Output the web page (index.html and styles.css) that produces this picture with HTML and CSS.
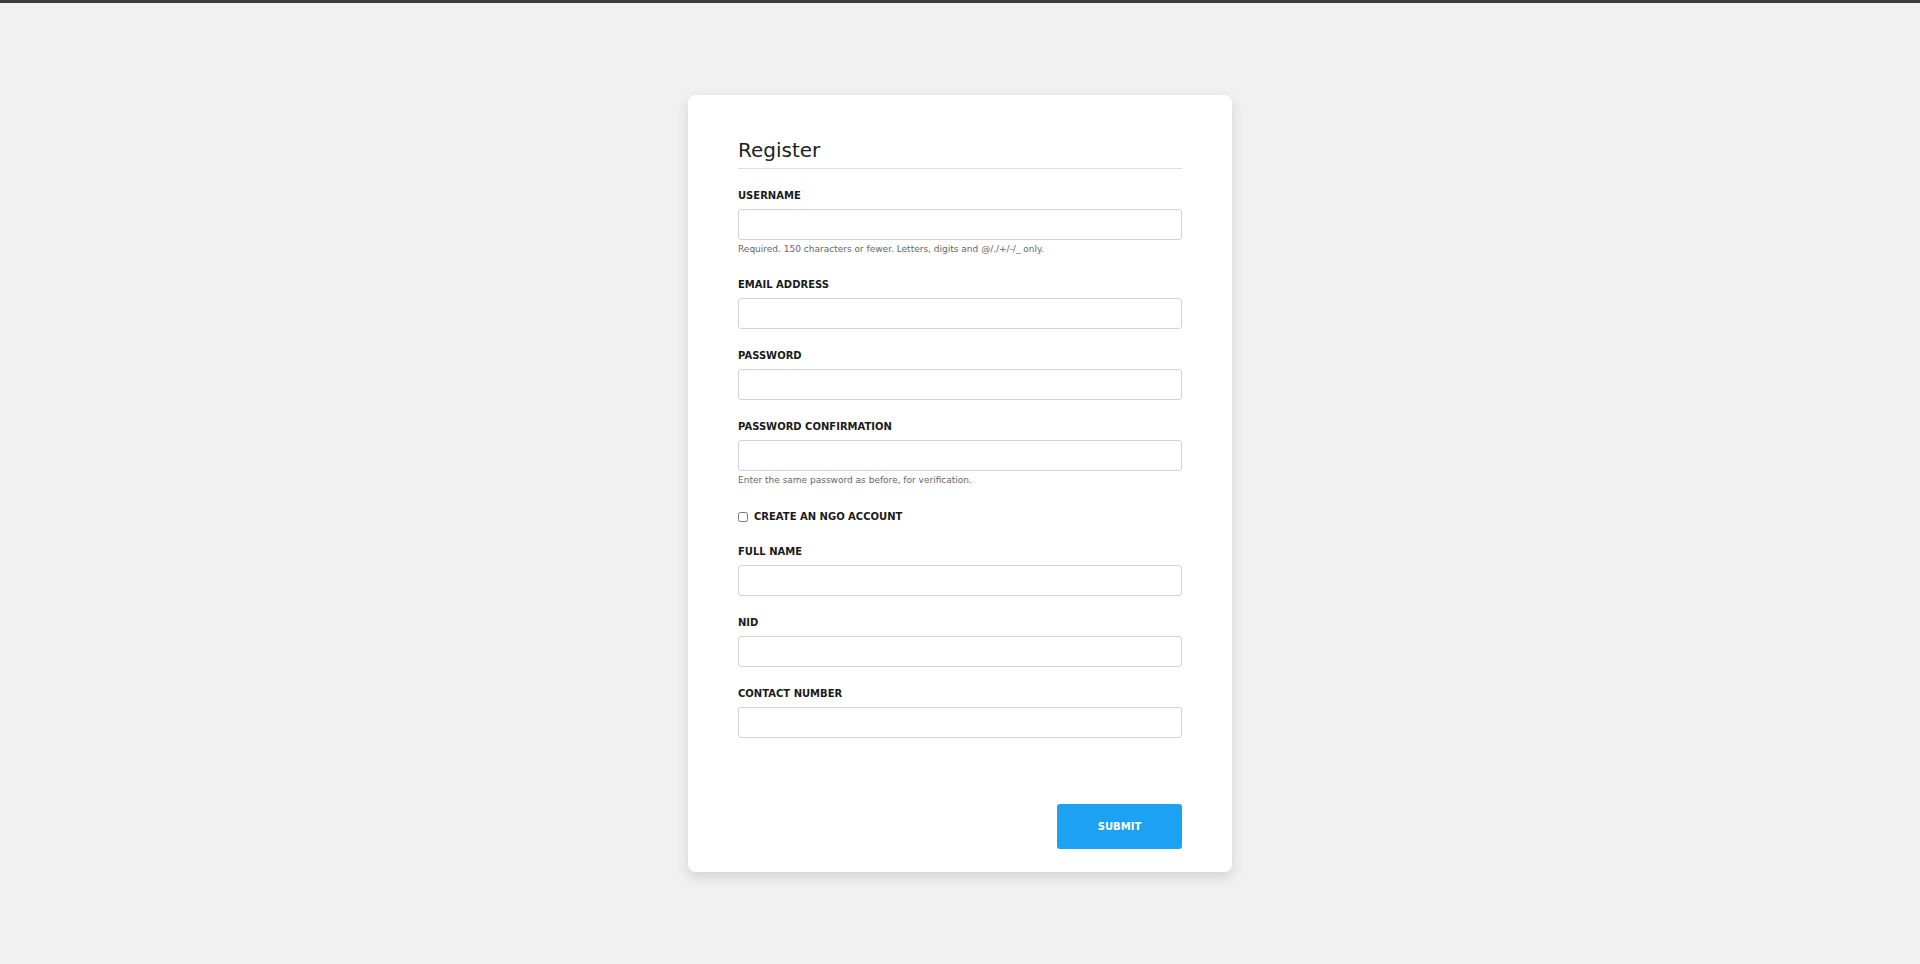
FILE: index.html
```html
<!DOCTYPE html>
<html lang="en">

<head>
  <meta charset="UTF-8" />
  <meta name="viewport" content="width=device-width, initial-scale=1.0" />
  <title>Register</title>
  <link rel="stylesheet" href="styles.css">
</head>

<body>
  <div class="page">
    <div class="card">
      <h2 class="card-title">Register</h2>

      <form class="form">
        <div class="form-group">
          <label for="username">Username</label>
          <input type="text" id="username">
          <small class="help">Required. 150 characters or fewer. Letters, digits and @/./+/-/_ only.</small>
        </div>
        <div class="form-group">
          <label for="email">Email address</label>
          <input type="email" id="email">
        </div>
        <div class="form-group">
          <label for="password1">Password</label>
          <input type="password" id="password1">
        </div>
        <div class="form-group">
          <label for="password2">Password confirmation</label>
          <input type="password" id="password2">
          <small class="help">Enter the same password as before, for verification.</small>
        </div>

        <!-- NGO -->
        <div class="check-group">
          <input type="checkbox" id="isNgo">
          <label for="isNgo">Create an NGO account</label>
        </div>

        <div class="form-group">
          <label for="fullName">Full name</label>
          <input type="text" id="fullName">
        </div>
        <div class="form-group">
          <label for="nid">NID</label>
          <input type="text" id="nid">
        </div>
        <div class="form-group">
          <label for="contact">Contact number</label>
          <input type="text" id="contact">
        </div>

        <div class="form-footer">
          <button type="submit" class="btn">Submit</button>
        </div>
      </form>
    </div>
  </div>
</body>

</html>
```

FILE: styles.css
```css
body {
  font-family: "DejaVu Sans", Verdana, sans-serif;
  background-color: #f1f1f1;
  color: #222;
  margin: 0;
  padding: 0;
  border-top: 3px solid #3a3b3d;
}

.page {
  padding-top: 92px;
  padding-bottom: 60px;
}

.card {
  box-sizing: border-box;
  width: 544px;
  margin: 0 auto;
  padding: 43px 50px 23px;
  background: #fff;
  border-radius: 8px;
  box-shadow: 0 5px 14px rgba(0, 0, 0, 0.13);
}

.card-title {
  margin: 0 0 20px;
  padding-bottom: 6px;
  font-size: 20px;
  font-weight: 500;
  line-height: 24px;
  color: #1e1e1e;
  border-bottom: 1px solid #dcdcdc;
}

.form {
  display: flex;
  flex-direction: column;
}

.form-group {
  display: flex;
  flex-direction: column;
  margin-bottom: 20px;
}

.form-group label,
.check-group label {
  display: block;
  font-size: 10px;
  font-weight: bold;
  line-height: 14px;
  text-transform: uppercase;
  color: #1a1a1a;
}

.form-group label {
  margin-bottom: 6px;
}

.form-group input {
  display: block;
  box-sizing: border-box;
  width: 100%;
  height: 31px;
  margin: 0;
  padding: 4px 8px;
  border: 1px solid #cfd2d7;
  border-radius: 3px;
  background: #fff;
}

.help {
  display: block;
  margin: 3px 0 3px;
  font-size: 9px;
  line-height: 12px;
  color: #666;
}

.check-group {
  display: flex;
  align-items: center;
  height: 16px;
  margin-bottom: 20px;
}

.check-group input {
  width: 10px;
  height: 10px;
  margin: 0 6px 0 0;
}

.form-footer {
  display: flex;
  justify-content: flex-end;
  margin-top: 46px;
}

.btn {
  width: 125px;
  height: 45px;
  border: none;
  border-radius: 3px;
  background: #1da1f2;
  color: #fff;
  font-family: inherit;
  font-size: 10px;
  font-weight: bold;
  text-transform: uppercase;
  cursor: pointer;
}
```
